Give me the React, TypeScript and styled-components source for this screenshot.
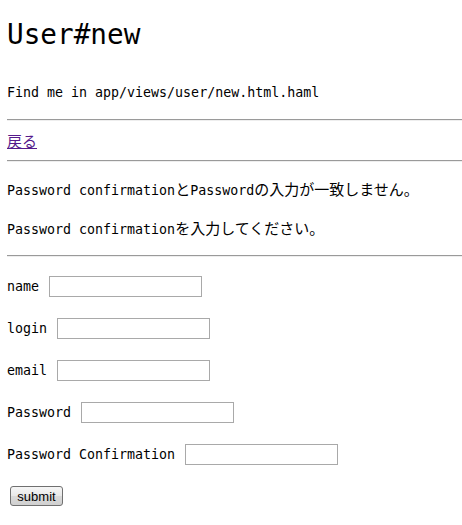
import styled, { createGlobalStyle } from 'styled-components';

const GlobalStyle = createGlobalStyle`
  html, body {
    margin: 0;
    padding: 0;
    background: #fff;
  }
`;

const Page = styled.div`
  padding: 0 0 0 7px;
  font-family: "DejaVu Sans Mono", "Noto Sans CJK JP", monospace;
  font-size: 13.3px;
  line-height: 16px;
  color: #000;
`;

const Title = styled.h1`
  margin: 19px 0 0 0;
  font-size: 27.7px;
  line-height: 32px;
  font-weight: normal;
`;

const Line = styled.p<{ $top: number }>`
  margin: ${(p) => p.$top}px 0 0 0;
  height: 16px;
  white-space: nowrap;
`;

// Japanese runs are set a little larger than the monospace text
const Jp = styled.span`
  font-family: "Noto Sans CJK JP", sans-serif;
  font-size: 15px;
  line-height: 16px;
`;

const Rule = styled.hr<{ $top: number }>`
  margin: ${(p) => p.$top}px 0 0 0;
  height: 0;
  border: 0;
  border-top: 1px solid #9a9a9a;
  border-bottom: 1px solid #eeeeee;
`;

const BackLink = styled.a`
  color: #551a8b;
  text-decoration: underline;
`;

const Form = styled.form`
  display: flex;
  flex-direction: column;
  gap: 21px;
  margin-top: 19px;
`;

const Row = styled.div`
  display: flex;
  align-items: center;
  gap: 10px;
  height: 21px;
`;

const Label = styled.label`
  white-space: nowrap;
`;

const Input = styled.input`
  box-sizing: border-box;
  width: 153px;
  height: 21px;
  margin: 0;
  padding: 1px 2px;
  border: 1px solid #a9a9a9;
  background: #fff;
  font-size: 13px;
`;

const Actions = styled.div`
  margin-top: 0;
  padding-left: 3px;
`;

const Submit = styled.button`
  box-sizing: border-box;
  width: 53px;
  height: 20px;
  padding: 0;
  border: 1px solid #707070;
  border-radius: 3px;
  background: linear-gradient(#f6f6f6 0%, #e8e8e8 50%, #dadada 51%, #d0d0d0 100%);
  font-family: "Liberation Sans", Arial, sans-serif;
  font-size: 13px;
  color: #000;
`;

const fields = [
  { id: 'name', label: 'name' },
  { id: 'login', label: 'login' },
  { id: 'email', label: 'email' },
  { id: 'password', label: 'Password', type: 'password' },
  { id: 'password_confirmation', label: 'Password Confirmation', type: 'password' },
];

export default function App() {
  return (
    <>
      <GlobalStyle />
      <Page>
        <Title>User#new</Title>
        <Line $top={34}>Find me in app/views/user/new.html.haml</Line>
        <Rule $top={18} />
        <Line $top={12}>
          <BackLink href="#"><Jp>戻る</Jp></BackLink>
        </Line>
        <Rule $top={11} />
        <Line $top={19}>
          Password confirmation<Jp>と</Jp>Password<Jp>の入力が一致しません。</Jp>
        </Line>
        <Line $top={23}>
          Password confirmation<Jp>を入力してください。</Jp>
        </Line>
        <Rule $top={19} />
        <Form onSubmit={(e) => e.preventDefault()}>
          {fields.map((f) => (
            <Row key={f.id}>
              <Label htmlFor={f.id}>{f.label}</Label>
              <Input id={f.id} type={f.type ?? 'text'} />
            </Row>
          ))}
          <Actions>
            <Submit type="submit">submit</Submit>
          </Actions>
        </Form>
      </Page>
    </>
  );
}
